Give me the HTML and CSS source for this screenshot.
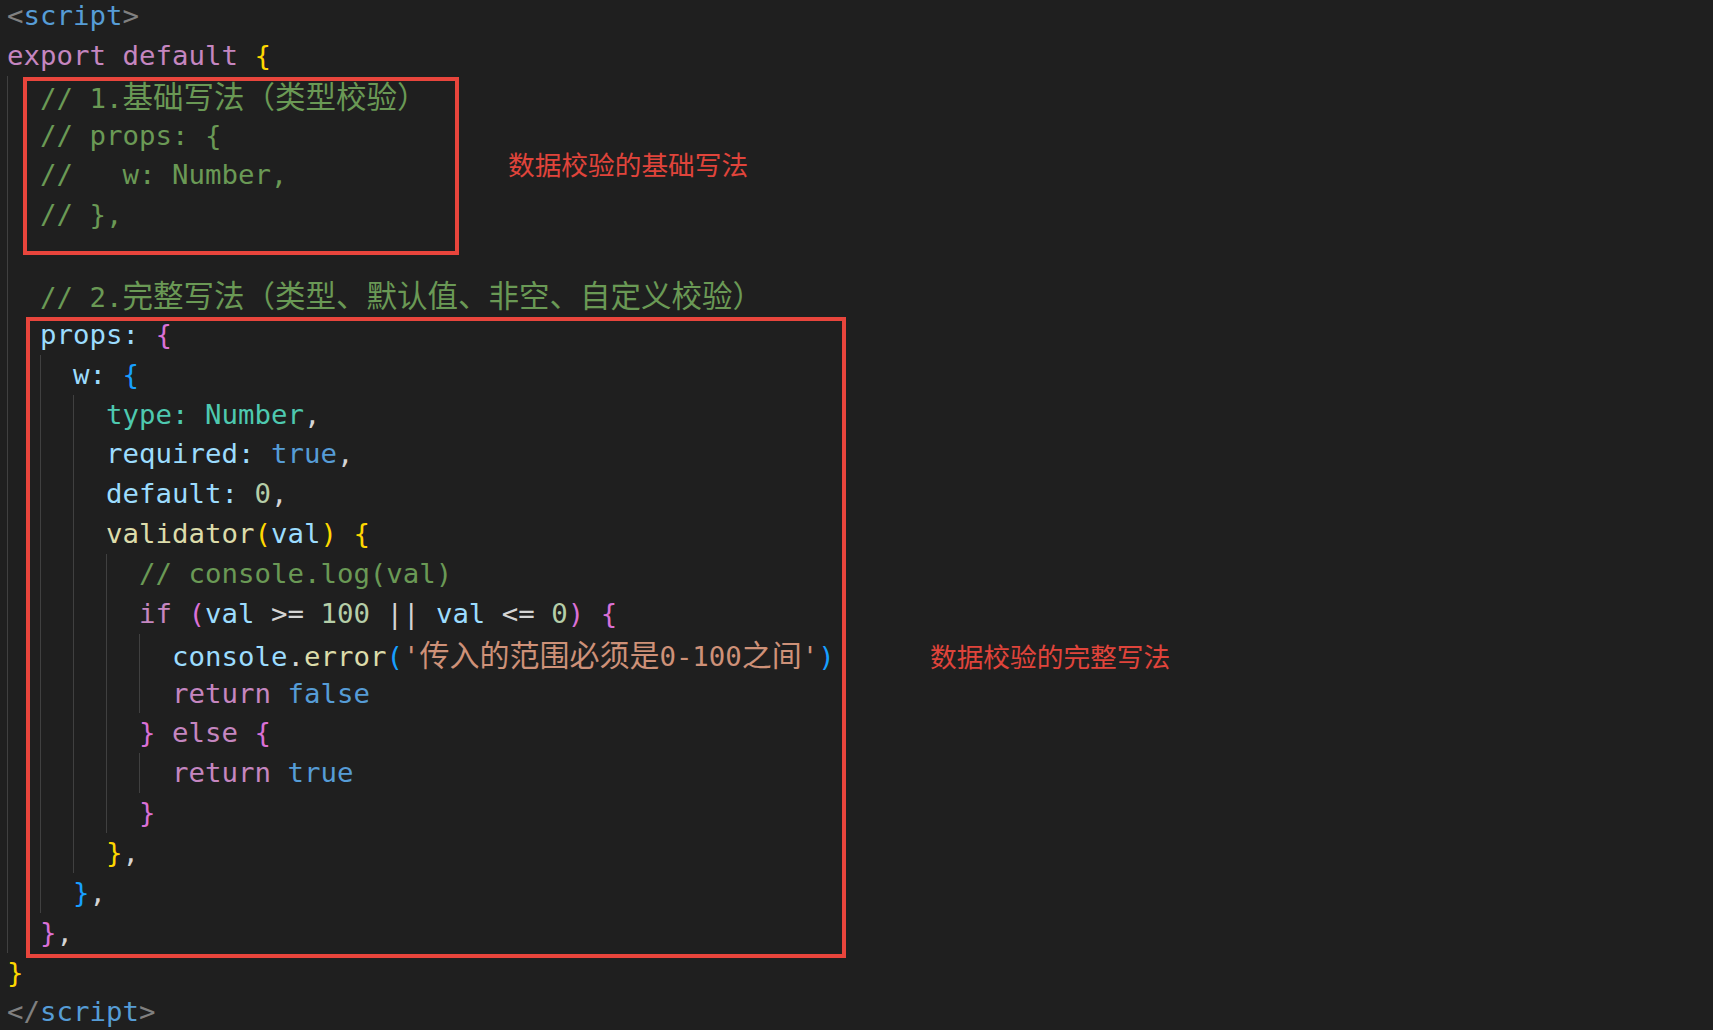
FILE: index.html
```html
<!DOCTYPE html>
<html lang="zh-CN">
<head>
<meta charset="utf-8">
<title>props 校验</title>
<link rel="stylesheet" href="styles.css">
</head>
<body>
<div class="screen">
<div class="code">
<div class="line"><span class="t">&lt;</span><span class="tg">script</span><span class="t">&gt;</span></div>
<div class="line"><span class="k">export</span> <span class="k">default</span> <span class="b1">{</span></div>
<div class="line"><span class="ig"></span><span class="c">// 1.<span class="cj cm">基础写法（类型校验）</span></span></div>
<div class="line"><span class="ig"></span><span class="c">// props: {</span></div>
<div class="line"><span class="ig"></span><span class="c">//   w: Number,</span></div>
<div class="line"><span class="ig"></span><span class="c">// },</span></div>
<div class="line"><span class="ig"></span></div>
<div class="line"><span class="ig"></span><span class="c">// 2.<span class="cj cm">完整写法（类型、默认值、非空、自定义校验）</span></span></div>
<div class="line"><span class="ig"></span><span class="p">props:</span> <span class="b2">{</span></div>
<div class="line"><span class="ig"></span><span class="ig"></span><span class="p">w:</span> <span class="b3">{</span></div>
<div class="line"><span class="ig"></span><span class="ig"></span><span class="ig"></span><span class="ty">type: Number</span>,</div>
<div class="line"><span class="ig"></span><span class="ig"></span><span class="ig"></span><span class="p">required:</span> <span class="bl">true</span>,</div>
<div class="line"><span class="ig"></span><span class="ig"></span><span class="ig"></span><span class="p">default:</span> <span class="n">0</span>,</div>
<div class="line"><span class="ig"></span><span class="ig"></span><span class="ig"></span><span class="f">validator</span><span class="b1">(</span><span class="p">val</span><span class="b1">)</span> <span class="b1">{</span></div>
<div class="line"><span class="ig"></span><span class="ig"></span><span class="ig"></span><span class="ig"></span><span class="c">// console.log(val)</span></div>
<div class="line"><span class="ig"></span><span class="ig"></span><span class="ig"></span><span class="ig"></span><span class="k">if</span> <span class="b2">(</span><span class="p">val</span> &gt;= <span class="n">100</span> || <span class="p">val</span> &lt;= <span class="n">0</span><span class="b2">)</span> <span class="b2">{</span></div>
<div class="line"><span class="ig"></span><span class="ig"></span><span class="ig"></span><span class="ig"></span><span class="ig"></span><span class="p">console</span>.<span class="f">error</span><span class="b3">(</span><span class="s">'<span class="cj">传入的范围必须是</span>0-100<span class="cj">之间</span>'</span><span class="b3">)</span></div>
<div class="line"><span class="ig"></span><span class="ig"></span><span class="ig"></span><span class="ig"></span><span class="ig"></span><span class="k">return</span> <span class="bl">false</span></div>
<div class="line"><span class="ig"></span><span class="ig"></span><span class="ig"></span><span class="ig"></span><span class="b2">}</span> <span class="k">else</span> <span class="b2">{</span></div>
<div class="line"><span class="ig"></span><span class="ig"></span><span class="ig"></span><span class="ig"></span><span class="ig"></span><span class="k">return</span> <span class="bl">true</span></div>
<div class="line"><span class="ig"></span><span class="ig"></span><span class="ig"></span><span class="ig"></span><span class="b2">}</span></div>
<div class="line"><span class="ig"></span><span class="ig"></span><span class="ig"></span><span class="b1">}</span>,</div>
<div class="line"><span class="ig"></span><span class="ig"></span><span class="b3">}</span>,</div>
<div class="line"><span class="ig"></span><span class="b2">}</span>,</div>
<div class="line"><span class="b1">}</span></div>
<div class="line"><span class="t">&lt;/</span><span class="tg">script</span><span class="t">&gt;</span></div>
</div>
<div class="box box-basic"></div>
<div class="box box-full"></div>
<div class="note note-basic">数据校验的基础写法</div>
<div class="note note-full">数据校验的完整写法</div>
</div>
</body>
</html>
```

FILE: styles.css
```css
html, body {
  margin: 0;
  padding: 0;
  background: #ffffff;
}

.screen {
  position: relative;
  width: 1713px;
  height: 1030px;
  overflow: hidden;
  background: #1f1f1f;
}

.code {
  margin-top: -4px;
  padding-left: 7px;
  font-family: "DejaVu Sans Mono", "Noto Sans CJK SC", monospace;
  font-size: 27.4px;
  line-height: 39.86px;
  color: #d4d4d4;
}

.line {
  height: 39.86px;
  white-space: pre;
}

.ig {
  display: inline-block;
  box-sizing: border-box;
  width: 33px;
  height: 39.86px;
  vertical-align: top;
  border-left: 1px solid #404040;
}

.cj {
  font-family: "Noto Sans CJK SC", sans-serif;
  font-size: 30px;
}

.cm {
  font-size: 30.5px;
}

.t { color: #808080; }
.tg { color: #569cd6; }
.k { color: #c586c0; }
.b1 { color: #ffd700; }
.b2 { color: #da70d6; }
.b3 { color: #179fff; }
.c { color: #6a9955; }
.p { color: #9cdcfe; }
.ty { color: #4ec9b0; }
.bl { color: #569cd6; }
.n { color: #b5cea8; }
.f { color: #dcdcaa; }
.s { color: #ce9178; }

.box {
  position: absolute;
  box-sizing: border-box;
  border: 4px solid #e8453c;
}

.box-basic {
  left: 23px;
  top: 77px;
  width: 436px;
  height: 178px;
}

.box-full {
  left: 26px;
  top: 317px;
  width: 820px;
  height: 641px;
}

.note {
  position: absolute;
  font-family: "Noto Sans CJK SC", sans-serif;
  font-size: 26.7px;
  line-height: 1;
  color: #e0443b;
  white-space: nowrap;
}

.note-basic {
  left: 508px;
  top: 151px;
}

.note-full {
  left: 930px;
  top: 643px;
}
```
